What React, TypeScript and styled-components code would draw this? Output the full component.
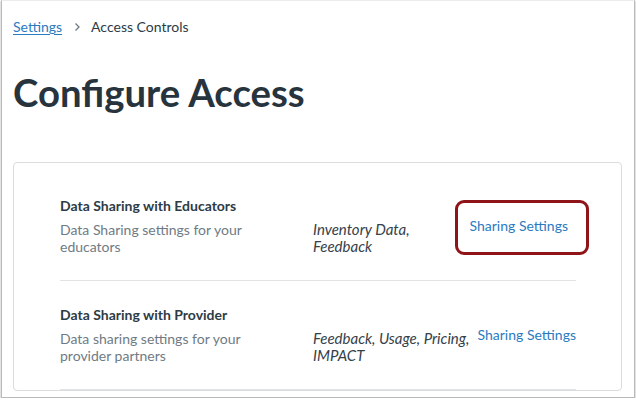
import React from "react";
import styled, { createGlobalStyle } from "styled-components";

const ink = "#2d3b45";
const muted = "#6f7b84";
const link = "#2a7bc1";

const GlobalStyle = createGlobalStyle`
  html, body {
    margin: 0;
    padding: 0;
    background: #ffffff;
  }
  body {
    font-family: Lato, "Noto Sans", sans-serif;
    color: ${ink};
  }
`;

const Window = styled.div`
  box-sizing: border-box;
  width: 634px;
  height: 398px;
  margin-left: 1px;
  border: 1px solid #b9b9b9;
  border-top-color: #ececec;
  box-shadow: 0 1px 2px rgba(0, 0, 0, 0.35);
  background: #fff;
  padding: 0 12px 5px 11px;
`;

const Viewport = styled.div`
  height: 392px;
  overflow: hidden;
  padding-top: 16px;
  box-sizing: border-box;
`;

const Breadcrumb = styled.nav`
  display: flex;
  align-items: center;
  font-size: 14px;
  line-height: 20px;
  height: 20px;
`;

const Crumb = styled.a`
  color: ${link};
  text-decoration: underline;
  text-underline-offset: 2px;
`;

const Chevron = styled.span`
  display: inline-flex;
  margin: 0 10px 0 11px;
  color: ${muted};
`;

const Current = styled.span`
  color: ${ink};
`;

const Title = styled.h1`
  margin: 32px 0 0;
  font-size: 38.3px;
  line-height: 46px;
  font-weight: 700;
  color: #28343d;
`;

const Card = styled.section`
  margin-top: 47px;
  border: 1px solid #dadcde;
  border-radius: 4px;
  padding: 33px 45px 0 46px;
`;

const Row = styled.div<{ $first?: boolean }>`
  display: grid;
  grid-template-columns: 245px 1fr auto;
  grid-template-areas:
    "title tags link"
    "desc tags link";
  column-gap: 8px;
  padding: ${(p) => (p.$first ? "0" : "24px")} 0 25px;
  border-bottom: 1px solid #e1e3e5;
`;

const RowTitle = styled.div`
  grid-area: title;
  font-size: 14px;
  line-height: 20px;
  font-weight: 700;
  color: ${ink};
  margin-bottom: 5px;
`;

const RowDesc = styled.div`
  grid-area: desc;
  max-width: 195px;
  font-size: 14px;
  line-height: 17px;
  color: ${muted};
`;

const Tags = styled.div`
  grid-area: tags;
  align-self: end;
  font-size: 15px;
  line-height: 17px;
  font-style: italic;
  color: #34414a;
`;

const LinkCell = styled.div`
  grid-area: link;
  align-self: center;
  justify-self: end;
`;

const Highlight = styled.span`
  position: relative;
  display: inline-block;
  padding-right: 8px;
  &::after {
    content: "";
    position: absolute;
    left: -15px;
    right: -13px;
    top: -15px;
    bottom: -19px;
    border: 3px solid #8e1418;
    border-radius: 9px;
    box-sizing: border-box;
    pointer-events: none;
  }
`;

const SettingsLink = styled.a`
  display: inline-block;
  font-size: 14px;
  line-height: 20px;
  color: ${link};
  text-decoration: none;
  white-space: nowrap;
`;

const rows = [
  {
    title: "Data Sharing with Educators",
    desc: "Data Sharing settings for your educators",
    tags: "Inventory Data, Feedback",
    highlight: true,
  },
  {
    title: "Data Sharing with Provider",
    desc: "Data sharing settings for your provider partners",
    tags: "Feedback, Usage, Pricing, IMPACT",
    highlight: false,
  },
];

export default function App() {
  return (
    <>
      <GlobalStyle />
      <Window>
        <Viewport>
          <Breadcrumb>
            <Crumb href="#">Settings</Crumb>
            <Chevron>
              <svg width="8" height="10" viewBox="0 0 8 10" fill="none">
                <path d="M2.5 1.5 L6 5 L2.5 8.5" stroke={muted} strokeWidth="1.3" />
              </svg>
            </Chevron>
            <Current>Access Controls</Current>
          </Breadcrumb>
          <Title>Configure Access</Title>
          <Card>
            {rows.map((r, i) => (
              <Row key={r.title} $first={i === 0}>
                <RowTitle>{r.title}</RowTitle>
                <RowDesc>{r.desc}</RowDesc>
                <Tags>{r.tags}</Tags>
                <LinkCell>
                  {r.highlight ? (
                    <Highlight>
                      <SettingsLink href="#">Sharing Settings</SettingsLink>
                    </Highlight>
                  ) : (
                    <SettingsLink href="#">Sharing Settings</SettingsLink>
                  )}
                </LinkCell>
              </Row>
            ))}
          </Card>
        </Viewport>
      </Window>
    </>
  );
}
